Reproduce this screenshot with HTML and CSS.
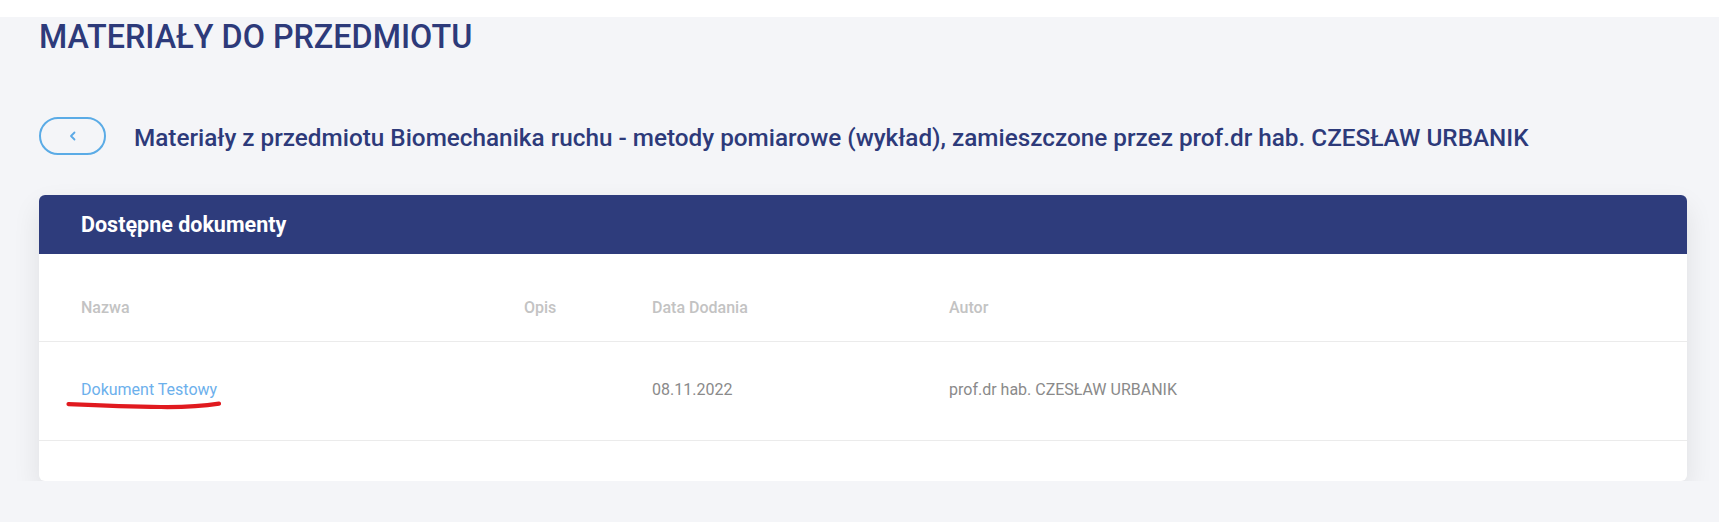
FILE: index.html
```html
<!DOCTYPE html>
<html lang="pl">
<head>
  <meta charset="UTF-8" />
  <meta name="viewport" content="width=device-width, initial-scale=1.0"/>
  <title>Materiały do przedmiotu</title>
  <link rel="stylesheet" href="styles.css">
</head>
<body>
  <div class="topbar"></div>

  <main class="content">
    <h1 class="page-title">MATERIAŁY DO PRZEDMIOTU</h1>

    <div class="subject-row">
      <button type="button" class="back-btn" aria-label="Wstecz">
        <svg width="8" height="10" viewBox="0 0 8 10">
          <path d="M5.5 1.5 L2 5 L5.5 8.5" fill="none" stroke="#5aa9e6" stroke-width="1.8" stroke-linecap="round" stroke-linejoin="round"/>
        </svg>
      </button>
      <h2 class="subject-title">Materiały z przedmiotu Biomechanika ruchu - metody pomiarowe (wykład), zamieszczone przez prof.dr hab. CZESŁAW URBANIK</h2>
    </div>

    <section class="card">
      <div class="card-header">Dostępne dokumenty</div>
      <div class="card-body">
        <table class="docs">
          <colgroup>
            <col class="col-name">
            <col class="col-desc">
            <col class="col-date">
            <col>
          </colgroup>
          <thead>
            <tr>
              <th>Nazwa</th>
              <th>Opis</th>
              <th>Data Dodania</th>
              <th>Autor</th>
            </tr>
          </thead>
          <tbody>
            <tr>
              <td>
                <span class="marked">
                  <a href="#" class="doc-link">Dokument Testowy</a>
                  <svg class="scribble" width="156" height="9" viewBox="0 0 156 9">
                    <path d="M2.5 3.2 C 30 4.4, 60 5.6, 95 6 C 120 6.3, 135 5.4, 153 2.6" fill="none" stroke="#e01a1f" stroke-width="4.2" stroke-linecap="round"/>
                  </svg>
                </span>
              </td>
              <td></td>
              <td>08.11.2022</td>
              <td>prof.dr hab. CZESŁAW URBANIK</td>
            </tr>
          </tbody>
        </table>
      </div>
    </section>
  </main>
</body>
</html>
```

FILE: styles.css
```css
body {
  margin: 0;
  font-family: Roboto, "Liberation Sans", sans-serif;
  background: #f4f5f8;
  color: #2d3a7a;
}
.topbar {
  height: 17px;
  background: #fff;
}
.content {
  padding: 0 32px 0 39px;
}
.page-title {
  margin: 1px 0 0;
  font-size: 32.3px;
  line-height: 38px;
  font-weight: 500;
  color: #2d3a7a;
}
.subject-row {
  display: flex;
  align-items: center;
  gap: 28px;
  margin-top: 61px;
}
.back-btn {
  flex: none;
  width: 67px;
  height: 38px;
  padding: 0;
  border: 2px solid #5aabe6;
  border-radius: 19px;
  background: transparent;
  display: flex;
  align-items: center;
  justify-content: center;
  cursor: pointer;
}
.subject-title {
  margin: 3px 0 0;
  font-size: 24.3px;
  line-height: 28px;
  font-weight: 500;
  color: #2d3a7a;
  white-space: nowrap;
}
.card {
  margin-top: 40px;
  background: #fff;
  border-radius: 6px;
  box-shadow: 0 12px 28px rgba(0,0,0,0.09);
  overflow: hidden;
}
.card-header {
  height: 59px;
  display: flex;
  align-items: center;
  padding-left: 42px;
  background: #2e3c7c;
  color: #fff;
  font-size: 21.5px;
  font-weight: 700;
}
.card-body {
  padding: 21px 0 40px;
}
.docs {
  width: 100%;
  border-collapse: collapse;
  table-layout: fixed;
  font-size: 16px;
  text-align: left;
}
.col-name { width: 485px; }
.col-desc { width: 128px; }
.col-date { width: 297px; }
.docs th,
.docs td {
  padding: 23px 0;
  line-height: 20px;
}
.docs th:first-child,
.docs td:first-child { padding-left: 42px; }
.docs tr { border-bottom: 1px solid #ebebeb; }
.docs th {
  font-weight: 500;
  color: #c3c3c3;
}
.docs td {
  padding-top: 38px;
  padding-bottom: 40px;
  color: #8a8a8a;
}
.marked {
  position: relative;
  display: inline-block;
}
.doc-link {
  color: #6cb0ec;
  text-decoration: none;
}
.scribble {
  position: absolute;
  left: -15px;
  top: 100%;
  margin-top: 1px;
}
```
